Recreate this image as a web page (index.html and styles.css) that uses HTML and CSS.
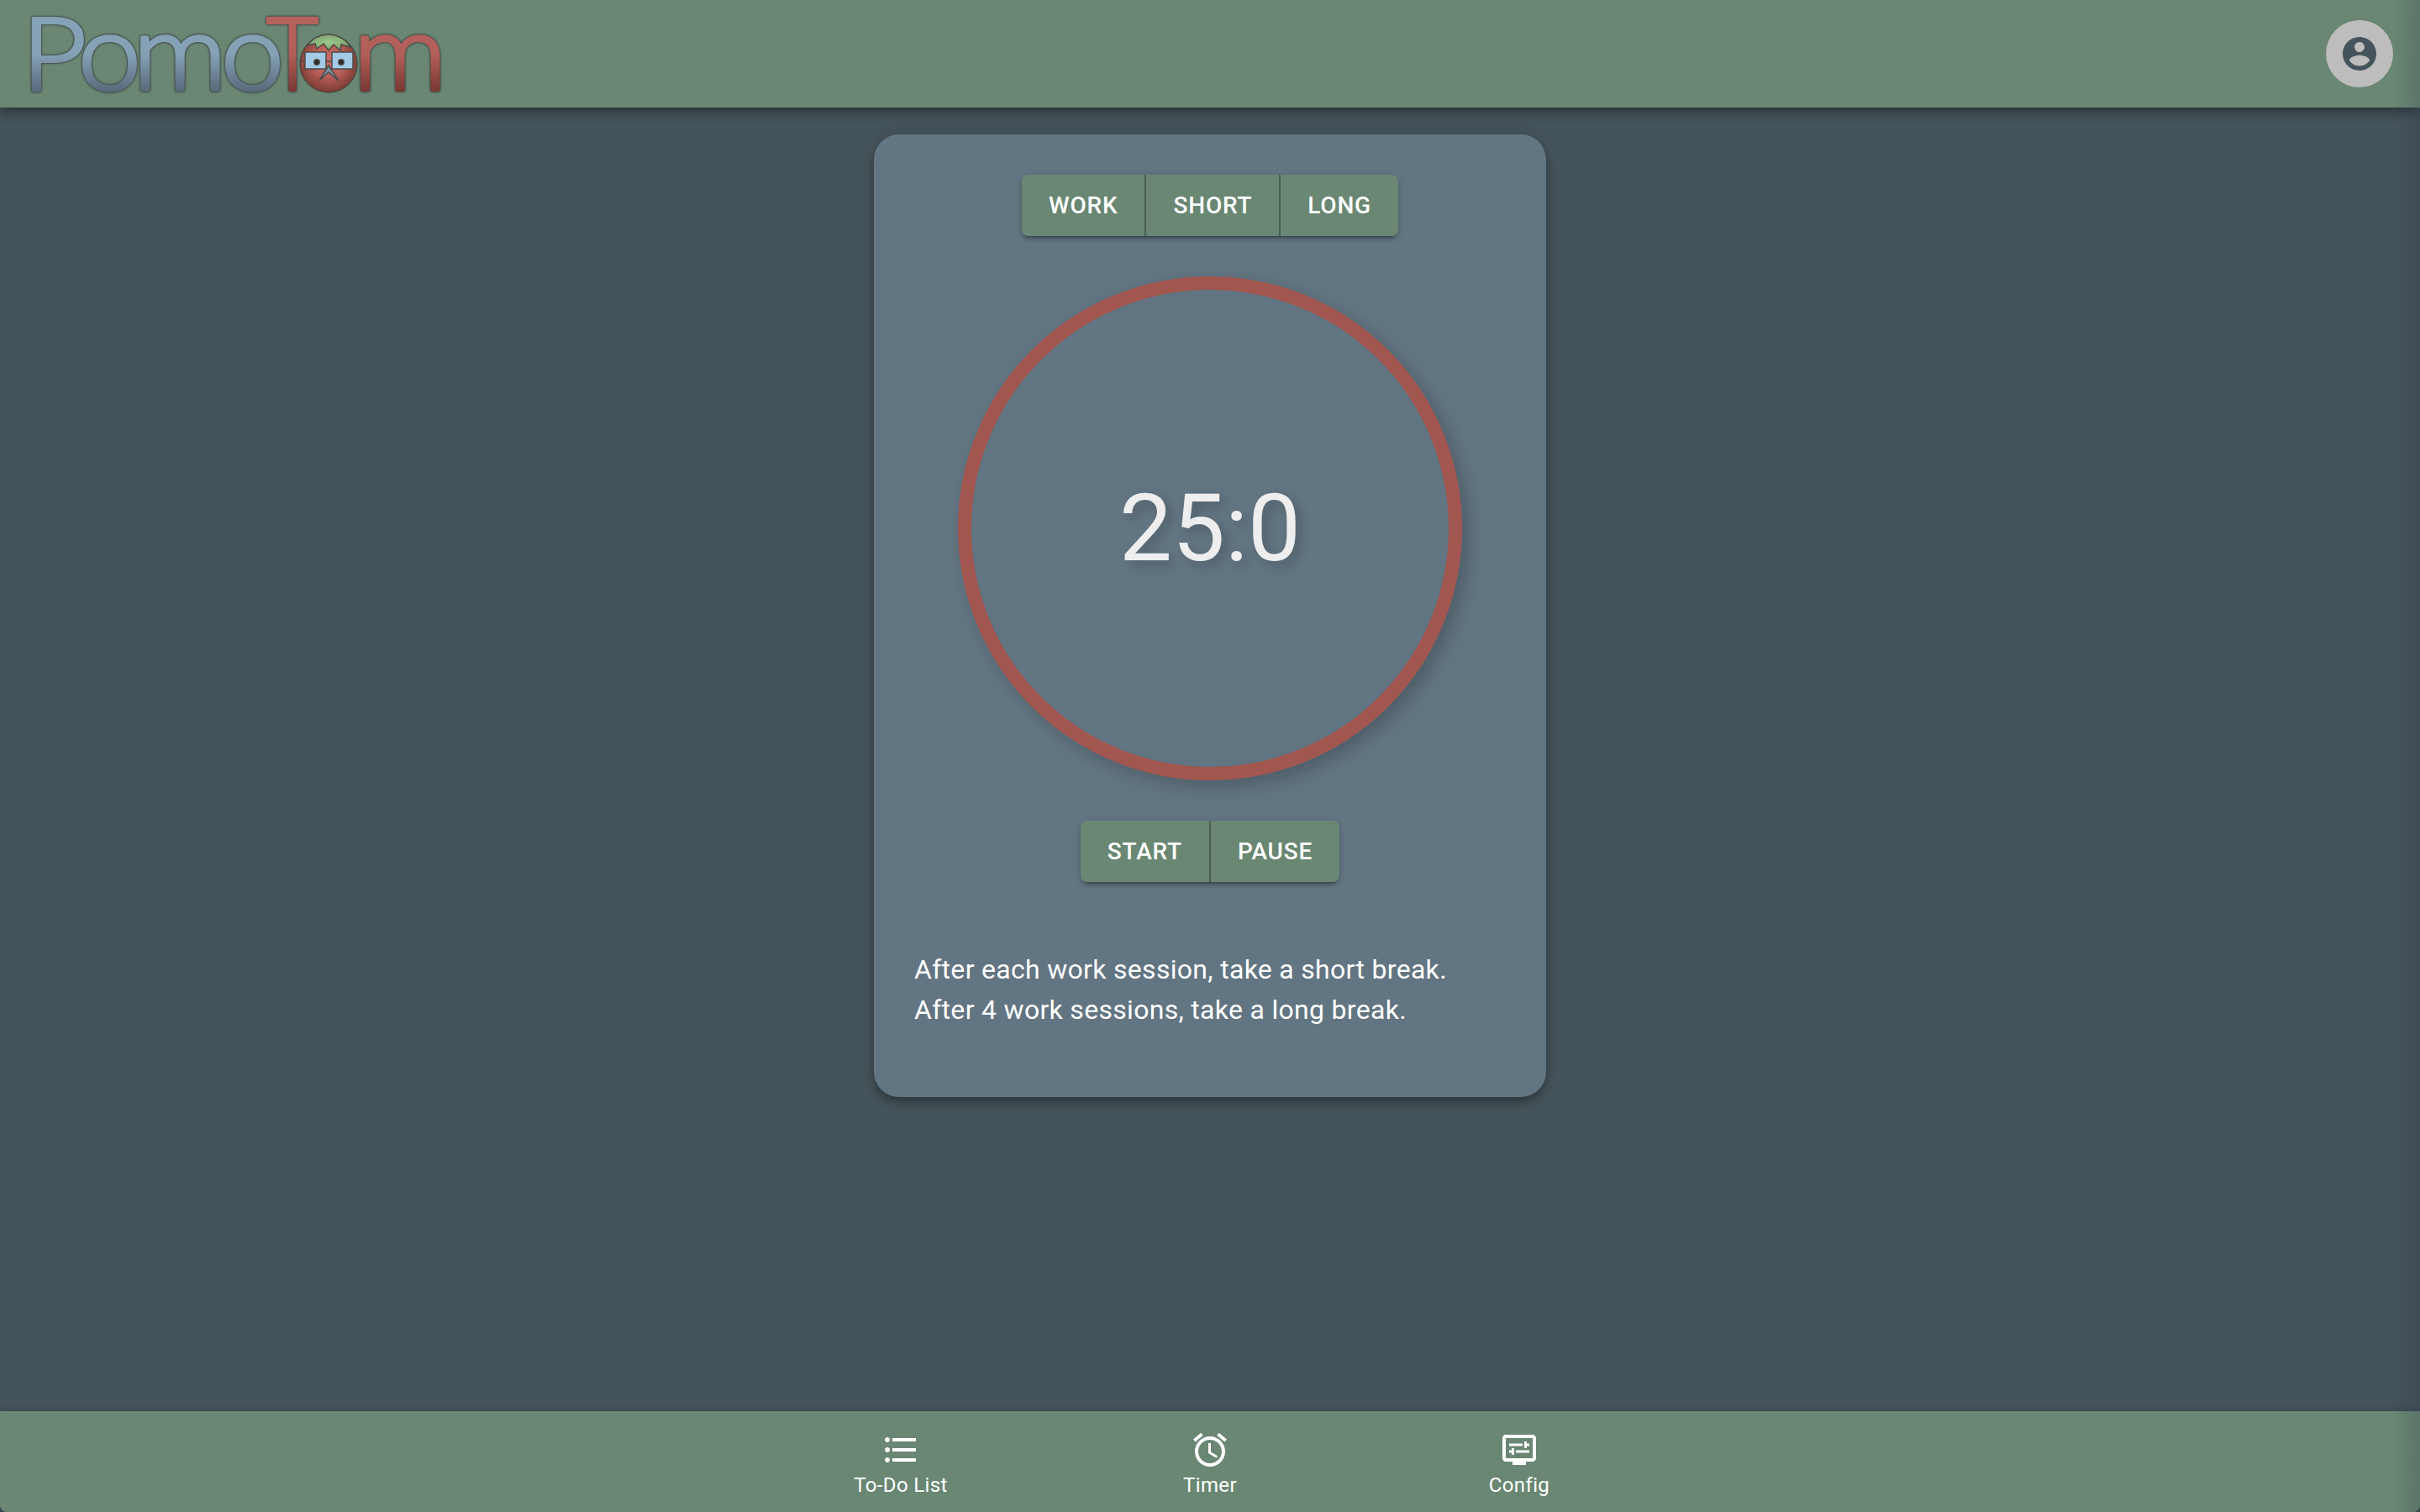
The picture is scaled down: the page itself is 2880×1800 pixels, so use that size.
FILE: index.html
```html
<!DOCTYPE html>
<html lang="en">
<head>
<meta charset="utf-8">
<title>PomoTom</title>
<link rel="stylesheet" href="styles.css">
</head>
<body>
<div class="app">
  <header class="topbar">
    <svg class="logo" width="500" height="128" viewBox="0 0 500 128" role="img" aria-label="PomoTom">
      <defs>
        <linearGradient id="blue" gradientUnits="userSpaceOnUse" x1="0" y1="18" x2="0" y2="111">
          <stop offset="0" stop-color="#86a2b8"/><stop offset=".5" stop-color="#84a1b6"/><stop offset="1" stop-color="#566778"/>
        </linearGradient>
        <linearGradient id="red" gradientUnits="userSpaceOnUse" x1="0" y1="18" x2="0" y2="111">
          <stop offset="0" stop-color="#b5625c"/><stop offset=".5" stop-color="#b35f59"/><stop offset="1" stop-color="#74362f"/>
        </linearGradient>
        <radialGradient id="skin" cx=".5" cy=".45" r=".55">
          <stop offset="0" stop-color="#cb6d65"/><stop offset=".5" stop-color="#b95f58"/><stop offset="1" stop-color="#7b3a34"/>
        </radialGradient>
        <radialGradient id="leaf"><stop offset="0" stop-color="#9cc78a"/><stop offset="1" stop-color="#7fa673"/></radialGradient>
      </defs>
      <g class="word blue">
        <text x="-10" y="107" font-size="121" textLength="77" lengthAdjust="spacingAndGlyphs">P</text>
        <text x="57" y="107" font-size="126" textLength="75" lengthAdjust="spacingAndGlyphs">o</text>
        <text x="122" y="107" font-size="126" textLength="112" lengthAdjust="spacingAndGlyphs">m</text>
        <text x="227" y="107" font-size="126" textLength="75" lengthAdjust="spacingAndGlyphs">o</text>
      </g>
      <g class="word red">
        <text x="281" y="107" font-size="121" textLength="62" lengthAdjust="spacingAndGlyphs">T</text>
        <text x="384" y="107" font-size="126" textLength="112" lengthAdjust="spacingAndGlyphs">m</text>
      </g>
      <g class="tomato">
        <circle cx="355" cy="76" r="34" fill="url(#skin)"/>
        <path fill="url(#leaf)" d="M330 54C336 45 346 41 355 41S376 46 381 56L370 53 369 60 361 53 355 60 349 52 341 58 339 52Z"/>
        <path d="M321 73H389"/>
        <rect x="327" y="62" width="25" height="20" fill="#a3cbe6"/>
        <rect x="359" y="62" width="25" height="20" fill="#a3cbe6"/>
        <path fill="#7792a6" d="M355 78 344 96 355 86 367 96Z"/>
        <circle class="pupil" cx="341" cy="74" r="3.2"/>
        <circle class="pupil" cx="370" cy="74" r="3.2"/>
      </g>
    </svg>
    <button class="avatar" aria-label="Account">
      <svg class="icon" viewBox="0 0 24 24"><path d="M12 2C6.48 2 2 6.48 2 12s4.48 10 10 10 10-4.48 10-10S17.52 2 12 2zm0 3c1.66 0 3 1.34 3 3s-1.34 3-3 3-3-1.34-3-3 1.34-3 3-3zm0 14.2c-2.5 0-4.71-1.28-6-3.22.03-1.99 4-3.08 6-3.08 1.99 0 5.97 1.09 6 3.08-1.29 1.94-3.5 3.22-6 3.22z"/></svg>
    </button>
  </header>

  <main class="content">
    <section class="card">
      <div class="button-group">
        <button class="button">Work</button>
        <button class="button">Short</button>
        <button class="button">Long</button>
      </div>
      <div class="dial"><span class="time">25:0</span></div>
      <div class="button-group">
        <button class="button">Start</button>
        <button class="button">Pause</button>
      </div>
      <p class="hint">After each work session, take a short break.<br>After 4 work sessions, take a long break.</p>
    </section>
  </main>

  <nav class="bottombar">
    <a class="tab">
      <svg class="icon" viewBox="0 0 24 24"><path d="M4 10.5c-.83 0-1.5.67-1.5 1.5s.67 1.5 1.5 1.5 1.5-.67 1.5-1.5-.67-1.5-1.5-1.5zm0-6c-.83 0-1.5.67-1.5 1.5S3.17 7.5 4 7.5 5.5 6.83 5.5 6 4.83 4.5 4 4.5zm0 12c-.83 0-1.5.68-1.5 1.5s.68 1.5 1.5 1.5 1.5-.68 1.5-1.5-.67-1.5-1.5-1.5zM7 19h14v-2H7v2zm0-6h14v-2H7v2zm0-8v2h14V5H7z"/></svg>
      <span class="tab-label">To-Do List</span>
    </a>
    <a class="tab">
      <svg class="icon" viewBox="0 0 24 24"><path d="m22 5.72-4.6-3.86-1.29 1.53 4.6 3.86L22 5.72zM7.88 3.39 6.6 1.86 2 5.71l1.29 1.53 4.59-3.85zM12.5 8H11v6l4.75 2.85.75-1.23-4-2.37V8zM12 4c-4.97 0-9 4.03-9 9s4.02 9 9 9c4.97 0 9-4.03 9-9s-4.03-9-9-9zm0 16c-3.87 0-7-3.13-7-7s3.13-7 7-7 7 3.13 7 7-3.13 7-7 7z"/></svg>
      <span class="tab-label">Timer</span>
    </a>
    <a class="tab">
      <svg class="icon" viewBox="0 0 24 24"><path d="M20 3H4c-1.11 0-2 .89-2 2v12c0 1.1.89 2 2 2h4v2h8v-2h4c1.1 0 2-.9 2-2V5c0-1.11-.9-2-2-2zm0 14H4V5h16v12z"/><path d="M6 8.25h8v1.5H6zM16.5 9.75H18v-1.5h-1.5V7H15v4h1.5zM10 12.25h8v1.5h-8zM7.5 15H9v-4H7.5v1.25H6v1.5h1.5z"/></svg>
      <span class="tab-label">Config</span>
    </a>
  </nav>
</div>
</body>
</html>
```
FILE: styles.css
```css
* { box-sizing: border-box; }
body { margin: 0; background: #34434e; font-family: Roboto, "Liberation Sans", sans-serif; color: #fff; }
.app {
  position: relative; display: flex; flex-direction: column; height: 100vh; overflow: hidden;
  background: #45535a; border-radius: 0 0 8px 8px;
}
/* soft shade along the right window edge */
.app::after {
  content: ""; position: absolute; inset: 0 0 0 auto; width: 32px; pointer-events: none;
  background: linear-gradient(to right, rgba(40,50,70,0), rgba(40,50,70,.22));
}
button { border: 0; font: inherit; }
.icon { width: 48px; height: 48px; fill: currentColor; display: block; }

.topbar {
  display: flex; align-items: center; justify-content: space-between;
  height: 128px; flex: none; padding: 0 32px 0 36px; background: #698773;
  box-shadow: 0 4px 8px -2px rgba(0,0,0,.2), 0 8px 10px rgba(0,0,0,.14), 0 2px 20px rgba(0,0,0,.12);
}
.logo { display: block; overflow: visible; }
.word {
  font-family: Lato, sans-serif; font-weight: 300; stroke-width: 4; stroke-linejoin: round;
  filter: drop-shadow(0 0 .8px #3d4444) drop-shadow(0 0 .8px #3d4444);
}
.blue { fill: url(#blue); stroke: url(#blue); }
.red { fill: url(#red); stroke: url(#red); }
.tomato { stroke: #4d4a44; stroke-width: 1.5; }
.pupil { fill: #2c2a2a; }
.avatar {
  display: grid; place-items: center; width: 80px; height: 80px; padding: 0;
  border-radius: 50%; background: #bdbdbd; color: #45535a;
}

.content { flex: 1; display: flex; justify-content: center; align-items: flex-start; padding-top: 32px; }
.card {
  display: flex; flex-direction: column; align-items: center; gap: 48px;
  width: 800px; padding: 48px; border-radius: 30px; background: #627582;
  box-shadow: 0 4px 8px -2px rgba(0,0,0,.2), 0 8px 10px rgba(0,0,0,.14), 0 2px 20px rgba(0,0,0,.12);
}
.button-group {
  display: flex; border-radius: 8px;
  box-shadow: 0 6px 2px -4px rgba(0,0,0,.2), 0 4px 4px rgba(0,0,0,.14), 0 2px 10px rgba(0,0,0,.12);
}
.button {
  height: 73px; padding: 0 32px; background: #698773; color: #fff;
  font-size: 28px; font-weight: 500; letter-spacing: .02857em; text-transform: uppercase;
}
.button:first-child { border-radius: 8px 0 0 8px; }
.button:last-child { border-radius: 0 8px 8px 0; }
.button:not(:last-child) { border-right: 2px solid #495e50; }
.dial {
  display: grid; place-items: center; width: 600px; height: 600px;
  border: 16px solid #a1564f; border-radius: 50%;
  box-shadow: 8px 8px 20px rgba(0,0,0,.2);
}
.time { font-size: 112px; line-height: 1; color: #eee; text-shadow: 6px 6px 14px rgba(0,0,0,.2); }
.hint { align-self: stretch; margin: 32px 0; font-size: 32px; line-height: 48px; letter-spacing: .00938em; }

.bottombar {
  display: grid; grid-template-columns: repeat(3, 368px); justify-content: center;
  height: 120px; flex: none; padding-top: 22px; background: #698773;
  box-shadow: 0 0 10px rgba(0,0,0,.2);
}
.tab { display: flex; flex-direction: column; align-items: center; }
.tab-label { font-size: 24px; line-height: 36px; letter-spacing: .015em; }
```
